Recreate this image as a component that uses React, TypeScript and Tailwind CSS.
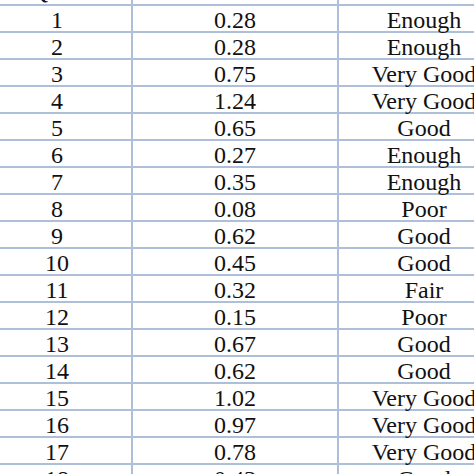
const rows: [string, string, string][] = [
  ["1", "0.28", "Enough"],
  ["2", "0.28", "Enough"],
  ["3", "0.75", "Very Good"],
  ["4", "1.24", "Very Good"],
  ["5", "0.65", "Good"],
  ["6", "0.27", "Enough"],
  ["7", "0.35", "Enough"],
  ["8", "0.08", "Poor"],
  ["9", "0.62", "Good"],
  ["10", "0.45", "Good"],
  ["11", "0.32", "Fair"],
  ["12", "0.15", "Poor"],
  ["13", "0.67", "Good"],
  ["14", "0.62", "Good"],
  ["15", "1.02", "Very Good"],
  ["16", "0.97", "Very Good"],
  ["17", "0.78", "Very Good"],
  ["18", "0.43", "Good"],
];

function Row({ cells, head }: { cells: string[]; head?: boolean }) {
  return (
    <div className="grid h-[27px] grid-cols-[150px_206px_170px] border-b-2 border-[#adbfd9]">
      {cells.map((c, i) => (
        <div
          key={i}
          className={`flex justify-center whitespace-nowrap leading-none ${head ? "items-end pb-[5px]" : "items-center pt-[2px]"} ${i < 2 ? "border-r-2 border-[#adbfd9]" : ""}`}
        >
          {c}
        </div>
      ))}
    </div>
  );
}

export default function App() {
  return (
    <div className="h-[474px] w-[474px] overflow-hidden bg-white">
      <div
        className="-ml-[17px] -mt-[21px] w-[526px] text-[24px] text-[#111]"
        style={{ fontFamily: '"Liberation Serif", "Times New Roman", serif' }}
      >
        <Row head cells={["Q No", "Index", "Criteria"]} />
        {rows.map((r) => (
          <Row key={r[0]} cells={r} />
        ))}
      </div>
    </div>
  );
}
